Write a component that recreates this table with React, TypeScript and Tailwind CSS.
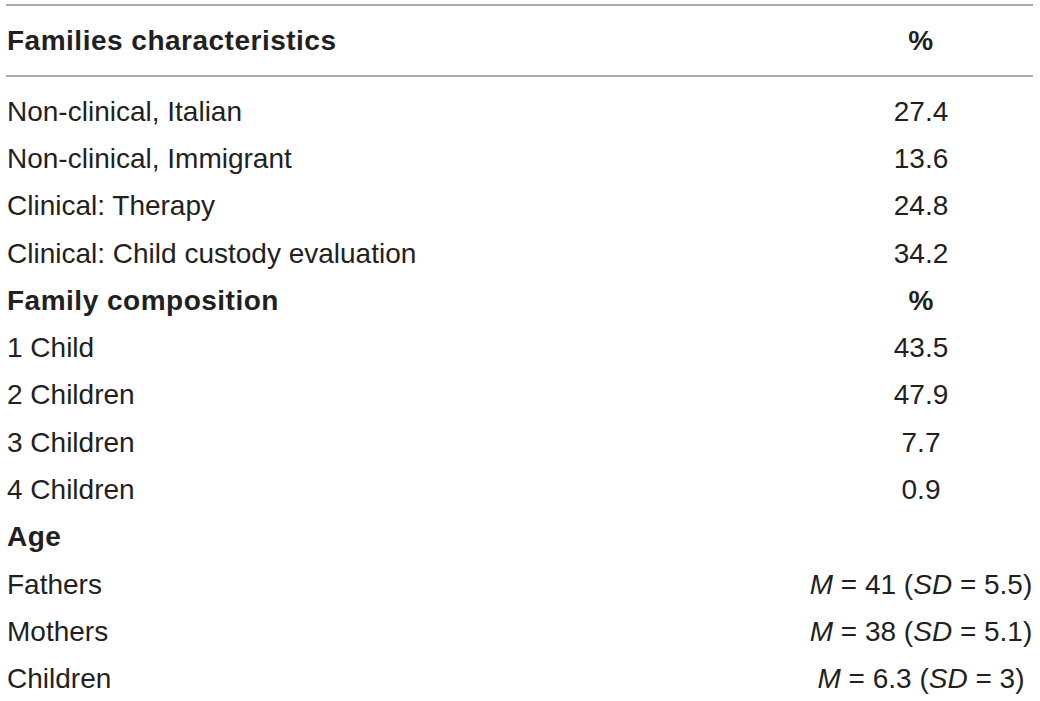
import React from "react";

type Row = { label: string; value: React.ReactNode; bold?: boolean };

const rows: Row[] = [
  { label: "Non-clinical, Italian", value: "27.4" },
  { label: "Non-clinical, Immigrant", value: "13.6" },
  { label: "Clinical: Therapy", value: "24.8" },
  { label: "Clinical: Child custody evaluation", value: "34.2" },
  { label: "Family composition", value: "%", bold: true },
  { label: "1 Child", value: "43.5" },
  { label: "2 Children", value: "47.9" },
  { label: "3 Children", value: "7.7" },
  { label: "4 Children", value: "0.9" },
  { label: "Age", value: "", bold: true },
  {
    label: "Fathers",
    value: (
      <>
        <i>M</i> = 41 (<i>SD</i> = 5.5)
      </>
    ),
  },
  {
    label: "Mothers",
    value: (
      <>
        <i>M</i> = 38 (<i>SD</i> = 5.1)
      </>
    ),
  },
  {
    label: "Children",
    value: (
      <>
        <i>M</i> = 6.3 (<i>SD</i> = 3)
      </>
    ),
  },
];

export default function App() {
  return (
    <div
      className="w-[1040px] h-[701px] bg-white overflow-hidden text-[#231f20] text-[28px]"
      style={{ fontFamily: '"Liberation Sans", Arial, sans-serif' }}
    >
      <div className="ml-[6px] w-[1027px] mt-[4px]">
        <div className="flex items-center h-[73px] border-t-2 border-b-2 border-[#a9a9a9] font-bold tracking-[0.5px]">
          <div className="flex-1 pl-[1px]">Families characteristics</div>
          <div className="w-[224px] text-center">%</div>
        </div>
        <div className="pt-[11px]">
          {rows.map((r, i) => (
            <div key={i} className="flex items-center h-[47.3px] whitespace-nowrap">
              <div className={`flex-1 pl-[1px] ${r.bold ? "font-bold tracking-[0.5px]" : ""}`}>{r.label}</div>
              <div className={`w-[224px] text-center ${r.bold ? "font-bold" : ""}`}>{r.value}</div>
            </div>
          ))}
        </div>
      </div>
    </div>
  );
}
